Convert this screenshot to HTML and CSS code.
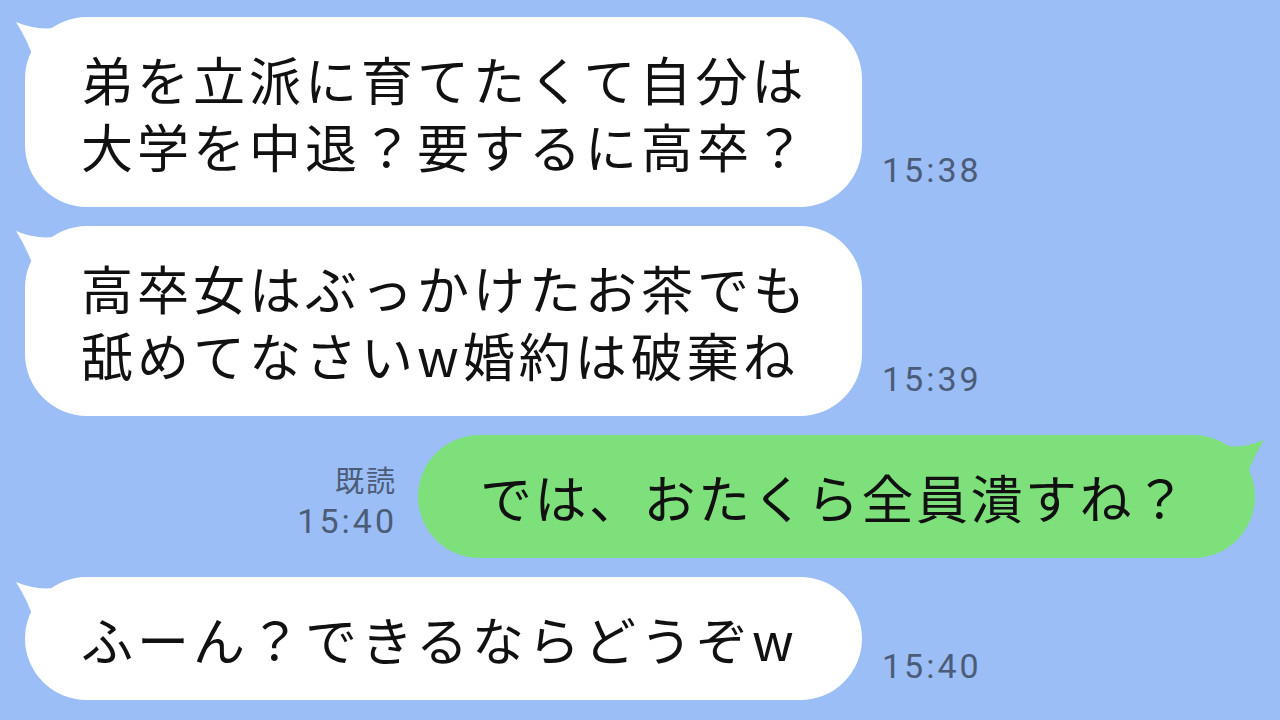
FILE: index.html
```html
<!DOCTYPE html>
<html lang="ja">
<head>
<meta charset="utf-8">
<title>Chat</title>
<link rel="stylesheet" href="styles.css">
</head>
<body>
<main class="chat">
  <div class="row">
    <div class="bubble white">
      <svg class="tail" viewBox="0 0 50 50" width="50" height="50"><path d="M3 5 Q22 13 40 11 L40 45 L22 45 Q14 22 3 5 Z"/></svg>
      <p class="msg">弟を立派に育てたくて自分は<br>大学を中退？要するに高卒？</p>
    </div>
    <div class="meta"><span class="time">15:38</span></div>
  </div>
  <div class="row">
    <div class="bubble white">
      <svg class="tail" viewBox="0 0 50 50" width="50" height="50"><path d="M3 5 Q22 13 40 11 L40 45 L22 45 Q14 22 3 5 Z"/></svg>
      <p class="msg">高卒女はぶっかけたお茶でも<br>舐めてなさいw婚約は破棄ね</p>
    </div>
    <div class="meta"><span class="time">15:39</span></div>
  </div>
  <div class="row sent">
    <div class="meta right"><span class="read">既読</span><span class="time">15:40</span></div>
    <div class="bubble green">
      <svg class="tail" viewBox="0 0 50 50" width="50" height="50"><path d="M3 5 Q22 13 40 11 L40 45 L22 45 Q14 22 3 5 Z"/></svg>
      <p class="msg">では、おたくら全員潰すね？</p>
    </div>
  </div>
  <div class="row">
    <div class="bubble white">
      <svg class="tail" viewBox="0 0 50 50" width="50" height="50"><path d="M3 5 Q22 13 40 11 L40 45 L22 45 Q14 22 3 5 Z"/></svg>
      <p class="msg">ふーん？できるならどうぞw</p>
    </div>
    <div class="meta last"><span class="time">15:40</span></div>
  </div>
</main>
</body>
</html>
```

FILE: styles.css
```css
html, body {
  margin: 0;
  padding: 0;
}

body {
  width: 1280px;
  height: 720px;
  overflow: hidden;
  background: #9cbef6;
  font-family: "Noto Sans CJK JP", "Noto Sans", sans-serif;
  color: #111;
}

.chat {
  display: flex;
  flex-direction: column;
  gap: 19px;
  padding: 17px 25px 0 25px;
}

.row {
  display: flex;
  align-items: flex-end;
  gap: 20px;
}

.row.sent {
  justify-content: flex-end;
  gap: 21px;
}

.bubble {
  position: relative;
  width: 837px;
  box-sizing: border-box;
  border-radius: 62px;
  padding: 28px 20px 28px 56px;
}

.bubble.white {
  background: #ffffff;
}

.bubble.white .tail {
  fill: #ffffff;
}

.bubble.green {
  background: #7de07b;
  padding-left: 62px;
}

.bubble.green .msg {
  letter-spacing: 2.5px;
}

.bubble.green .tail {
  fill: #7de07b;
  left: auto;
  right: -12px;
  transform: scaleX(-1);
}

.tail {
  position: absolute;
  left: -12px;
  top: 0;
}

.msg {
  position: relative;
  margin: 0;
  font-size: 52px;
  line-height: 67px;
  letter-spacing: 4px;
  white-space: nowrap;
}

.meta {
  display: flex;
  flex-direction: column;
  margin-bottom: 17px;
  color: #4b5c78;
}

.meta.last {
  margin-bottom: 14px;
}

.meta.right {
  align-items: flex-end;
}

.time {
  font-family: Roboto, "Noto Sans", sans-serif;
  font-size: 34px;
  line-height: 40px;
  letter-spacing: 3px;
}

.read {
  font-size: 29px;
  line-height: 43px;
  letter-spacing: 2px;
}
```
